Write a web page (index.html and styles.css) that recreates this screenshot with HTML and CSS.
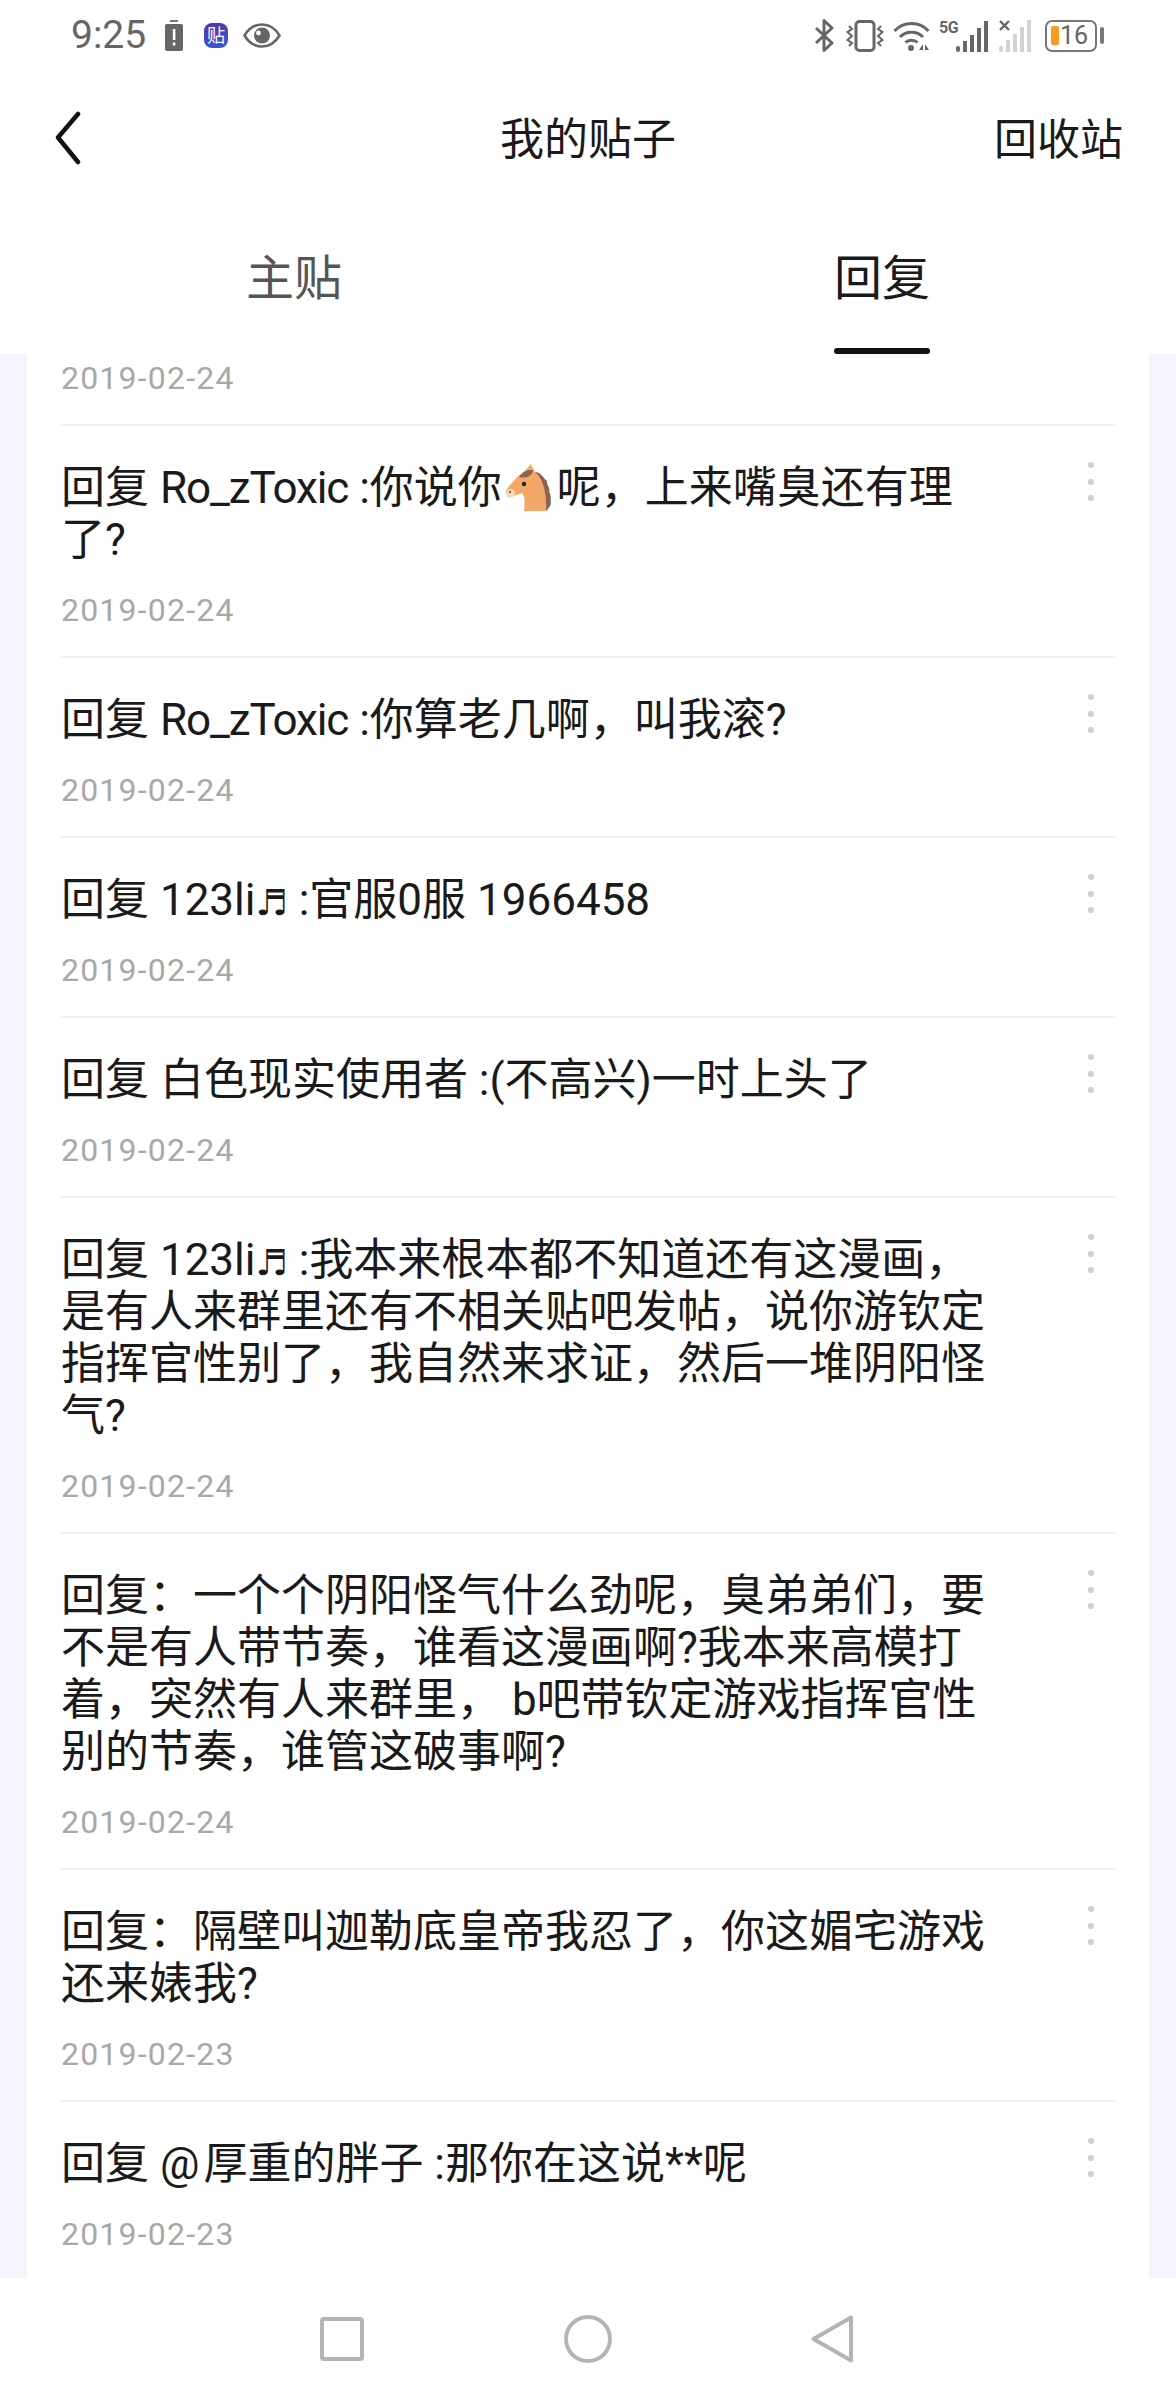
FILE: index.html
```html
<!DOCTYPE html>
<html lang="zh-CN">

<head>
  <meta charset="UTF-8">
  <meta name="viewport" content="width=device-width, initial-scale=1.0">
  <link rel="icon" href="data:,">
  <link rel="stylesheet" href="styles.css">
  <title>我的贴子</title>
</head>

<body>
  <header class="status-bar">
    <div class="status-left">
      <span class="clock">9:25</span>
      <svg class="ic-saver" viewBox="0 0 18 31">
        <rect x="5" y="0" width="8" height="2" fill="#777"/>
        <rect x="0" y="4" width="18" height="27" rx="2" fill="#666"/>
        <rect x="7.8" y="9" width="2.6" height="11" fill="#fff"/>
        <rect x="7.8" y="22.5" width="2.6" height="3" fill="#fff"/>
      </svg>
      <span class="app-badge">贴</span>
      <svg class="ic-eye" viewBox="0 0 38 25">
        <path d="M1.5 12.5C6 5 12 1.5 19 1.5S32 5 36.5 12.5C32 20 26 23.5 19 23.5S6 20 1.5 12.5Z" fill="none" stroke="#666" stroke-width="2.6"/>
        <circle cx="19" cy="12.5" r="8" fill="#666"/>
        <circle cx="15.5" cy="10" r="2.4" fill="#fff"/>
      </svg>
    </div>
    <div class="status-right">
      <svg class="ic-bt" viewBox="0 0 21 33">
        <path d="M2 9L18 24L10 31.500V1.500L18 9L2 24" fill="none" stroke="#666" stroke-width="3" stroke-linejoin="round"/>
      </svg>
      <svg class="ic-vibrate" viewBox="0 0 38 32">
        <rect x="10" y="1.500" width="18" height="29" rx="3.500" fill="none" stroke="#666" stroke-width="3"/>
        <path d="M3 6L6 9L1.500 12L6 16L1.500 20L6 23L3 26M35 6L32 9L36.500 12L32 16L36.500 20L32 23L35 26" fill="none" stroke="#666" stroke-width="2"/>
      </svg>
      <svg class="ic-wifi" viewBox="0 0 37 32">
        <path d="M1.500 11C10.500 1 26.500 1 35.500 11M7 17C13 10.500 24 10.500 30 17M12.500 22.500C15.500 19.500 21.500 19.500 24.500 22.500" fill="none" stroke="#666" stroke-width="3"/>
        <circle cx="18" cy="28" r="3" fill="#666"/>
        <path d="M26 30h4v-6zM32 24v6h4z" fill="#666"/>
      </svg>
      <div class="signal">
        <span class="net">5G</span>
        <svg class="ic-bars" viewBox="0 0 33 31">
          <rect x="0" y="25" width="4" height="6" rx="2" fill="#666"/>
          <rect x="7" y="20" width="4" height="11" fill="#666"/>
          <rect x="14" y="14" width="4" height="17" fill="#666"/>
          <rect x="21" y="7" width="4" height="24" fill="#666"/>
          <rect x="28" y="0" width="4" height="31" fill="#666"/>
        </svg>
      </div>
      <svg class="ic-bars-off" viewBox="0 0 34 32">
        <path d="M1 1L10 10M10 1L1 10" stroke="#666" stroke-width="2.400"/>
        <g fill="#d2d2d2">
          <rect x="0" y="26" width="4" height="6" rx="2"/>
          <rect x="7" y="20" width="4" height="12"/>
          <rect x="14" y="14" width="4" height="18"/>
          <rect x="21" y="7" width="4" height="25"/>
          <rect x="28" y="0" width="4" height="32"/>
        </g>
      </svg>
      <div class="battery">
        <div class="battery-body">
          <span class="battery-fill"></span>
          <span class="battery-num">16</span>
        </div>
        <span class="battery-nub"></span>
      </div>
    </div>
  </header>

  <nav class="top-nav">
    <svg class="ic-back" viewBox="0 0 26 54">
      <path d="M23 3L3 26.500L23 51" fill="none" stroke="#111" stroke-width="4.500" stroke-linecap="round" stroke-linejoin="round"/>
    </svg>
    <h1 class="nav-title">我的贴子</h1>
    <a class="nav-action">回收站</a>
  </nav>

  <div class="tabs">
    <div class="tab">主贴</div>
    <div class="tab tab-active">回复</div>
  </div>

  <main class="page">
    <ul class="post-list">
      <li class="post post-cut">
        <div class="post-body">
          <div class="post-date">2019-02-24</div>
        </div>
      </li>
      <li class="post">
        <div class="post-body">
          <p class="post-text">回复 <span class="tight">Ro_zToxic</span> :你说你<svg class="emoji" viewBox="0 0 47 48">
              <path d="M26 0L30 8C38 14 42 28 41 47L19 47C20 38 20 33 17 29L6 33C2 34 0 30 1 26C6 20 12 12 18 9Z" fill="#f4a867"/>
              <path d="M30 8C36 8 38 14 42 17C41 21 46 24 44 28C47 32 45 36 46 38C46 42 43 45 41 47C42 30 38 14 30 8Z" fill="#8c6350"/>
              <path d="M14 13C18 6 24 6 28 6C27 12 22 15 14 13Z" fill="#8c6350"/>
              <ellipse cx="5.500" cy="29" rx="4.500" ry="4" fill="#f7dcbc"/>
              <circle cx="5" cy="28" r="1.200" fill="#8c6350"/>
              <circle cx="19" cy="20" r="2.200" fill="#222"/>
            </svg>呢，上来嘴臭还有理了?</p>
          <div class="post-date">2019-02-24</div>
        </div>
        <span class="dots"><i></i><i></i><i></i></span>
      </li>
      <li class="post">
        <div class="post-body">
          <p class="post-text">回复 <span class="tight">Ro_zToxic</span> :你算老几啊，叫我滚?</p>
          <div class="post-date">2019-02-24</div>
        </div>
        <span class="dots"><i></i><i></i><i></i></span>
      </li>
      <li class="post">
        <div class="post-body">
          <p class="post-text">回复 123li<span class="note">♬</span> :官服0服 1966458</p>
          <div class="post-date">2019-02-24</div>
        </div>
        <span class="dots"><i></i><i></i><i></i></span>
      </li>
      <li class="post">
        <div class="post-body">
          <p class="post-text">回复 白色现实使用者 :(不高兴)一时上头了</p>
          <div class="post-date">2019-02-24</div>
        </div>
        <span class="dots"><i></i><i></i><i></i></span>
      </li>
      <li class="post">
        <div class="post-body">
          <p class="post-text">回复 123li<span class="note">♬</span> :我本来根本都不知道还有这漫画，是有人来群里还有不相关贴吧发帖，说你游钦定指挥官性别了，我自然来求证，然后一堆阴阳怪气?</p>
          <div class="post-date">2019-02-24</div>
        </div>
        <span class="dots"><i></i><i></i><i></i></span>
      </li>
      <li class="post">
        <div class="post-body">
          <p class="post-text">回复：一个个阴阳怪气什么劲呢，臭弟弟们，要不是有人带节奏，谁看这漫画啊?我本来高模打着，突然有人来群里， b吧带钦定游戏指挥官性别的节奏，谁管这破事啊?</p>
          <div class="post-date">2019-02-24</div>
        </div>
        <span class="dots"><i></i><i></i><i></i></span>
      </li>
      <li class="post">
        <div class="post-body">
          <p class="post-text">回复：隔壁叫迦勒底皇帝我忍了，你这媚宅游戏还来婊我?</p>
          <div class="post-date">2019-02-23</div>
        </div>
        <span class="dots"><i></i><i></i><i></i></span>
      </li>
      <li class="post">
        <div class="post-body">
          <p class="post-text">回复 <span class="at">@</span>厚重的胖子 :那你在这说**呢</p>
          <div class="post-date">2019-02-23</div>
        </div>
        <span class="dots"><i></i><i></i><i></i></span>
      </li>
    </ul>
  </main>

  <footer class="sys-nav">
    <svg class="sys-square" viewBox="0 0 44 44">
      <rect x="2" y="2" width="40" height="40" rx="2" fill="none" stroke="#b4b4b4" stroke-width="4"/>
    </svg>
    <svg class="sys-circle" viewBox="0 0 48 48">
      <circle cx="24" cy="24" r="22" fill="none" stroke="#b4b4b4" stroke-width="4"/>
    </svg>
    <svg class="sys-back" viewBox="0 0 42 48">
      <path d="M40 2.500V45.500L2.500 24Z" fill="none" stroke="#b4b4b4" stroke-width="4" stroke-linejoin="round"/>
    </svg>
  </footer>
</body>

</html>
```

FILE: styles.css
```css
* {
  box-sizing: border-box;
}

body {
  margin: 0;
  height: 2400px;
  overflow: hidden;
  display: flex;
  flex-direction: column;
  font-family: Roboto, "Noto Sans CJK SC", sans-serif;
  color: #1a1a1a;
  background: #f6f5fe;
}

/* status bar */
.status-bar {
  flex: none;
  height: 68px;
  padding: 19px 72px 0 71px;
  display: flex;
  justify-content: space-between;
  align-items: flex-start;
  background: #fff;
}

.status-left,
.status-right {
  display: flex;
  align-items: center;
  height: 33px;
}

.clock {
  width: 94px;
  font-size: 39px;
  line-height: 33px;
  color: #666;
}

.ic-saver {
  width: 18px;
  height: 31px;
}

.app-badge {
  width: 24px;
  height: 25px;
  margin: 0 15px 0 21px;
  border-radius: 8px;
  background: linear-gradient(160deg, #5b2ea6, #2f5fd8);
  color: #fff;
  font-size: 18px;
  line-height: 25px;
  text-align: center;
}

.ic-eye {
  width: 38px;
  height: 25px;
}

.ic-bt {
  width: 21px;
  height: 33px;
}

.ic-vibrate {
  width: 38px;
  height: 32px;
  margin-left: 11px;
}

.ic-wifi {
  width: 37px;
  height: 32px;
  margin-left: 9px;
}

.signal {
  position: relative;
  width: 50px;
  height: 33px;
  margin-left: 9px;
  display: flex;
  justify-content: flex-end;
  align-items: flex-end;
}

.net {
  position: absolute;
  left: 0;
  top: 1px;
  font-size: 16px;
  line-height: 16px;
  font-weight: 700;
  letter-spacing: -0.5px;
  color: #666;
}

.ic-bars {
  width: 33px;
  height: 31px;
}

.ic-bars-off {
  width: 34px;
  height: 32px;
  margin-left: 10px;
}

.battery {
  margin-left: 12px;
  display: flex;
  align-items: center;
  gap: 3px;
}

.battery-body {
  position: relative;
  width: 52px;
  height: 32px;
  border: 2.500px solid #777;
  border-radius: 7px;
  text-align: right;
  padding-right: 7px;
  font-size: 25px;
  line-height: 27px;
  color: #666;
}

.battery-fill {
  position: absolute;
  left: 4px;
  top: 4px;
  width: 8px;
  height: 19px;
  border-radius: 2px;
  background: #f79a1e;
}

.battery-num {
  position: relative;
}

.battery-nub {
  width: 4px;
  height: 17px;
  border-radius: 2px;
  background: #777;
}

/* title row */
.top-nav {
  flex: none;
  position: relative;
  height: 140px;
  padding: 0 53px 0 55px;
  display: flex;
  justify-content: space-between;
  align-items: center;
  background: #fff;
}

.ic-back {
  width: 26px;
  height: 54px;
}

.nav-title {
  position: absolute;
  left: 0;
  right: 0;
  margin: 0 0 5px;
  text-align: center;
  font-size: 44px;
  font-weight: 400;
}

.nav-action {
  position: relative;
  margin-bottom: 5px;
  font-size: 43px;
}

/* tabs */
.tabs {
  flex: none;
  height: 146px;
  display: flex;
  background: #fff;
}

.tab {
  flex: 1;
  padding-top: 39px;
  text-align: center;
  font-size: 48px;
  line-height: 64px;
  color: #555;
}

.tab-active {
  position: relative;
  color: #1a1a1a;
}

.tab-active::after {
  content: "";
  position: absolute;
  left: calc(50% - 48px);
  bottom: 0;
  width: 96px;
  height: 6px;
  border-radius: 3px;
  background: #111;
}

/* list */
.page {
  flex: 1;
  min-height: 0;
  overflow: hidden;
  padding: 0 27px;
}

.post-list {
  margin: 0;
  padding: 0 33px 0 34px;
  list-style: none;
  background: #fff;
  height: 100%;
}

.post {
  display: flex;
  justify-content: space-between;
  align-items: flex-start;
  padding: 36px 0 22px;
  border-bottom: 2px solid #f0f0f0;
}

.post-cut {
  padding-top: 0;
}

.post-body {
  width: 930px;
}

.post-text {
  margin: 0 0 20px;
  font-size: 44px;
  line-height: 52px;
}

.post-date {
  font-size: 32px;
  line-height: 48px;
  letter-spacing: 1.2px;
  color: #a8a8a8;
}

.tight {
  letter-spacing: -1.1px;
}

.at {
  letter-spacing: 4px;
}

.note {
  font-family: "DejaVu Sans", sans-serif;
  font-size: 36px;
  line-height: 0;
}

.emoji {
  width: 47px;
  height: 48px;
  margin: 0 5px 0 3px;
  vertical-align: -9px;
}

.dots {
  display: flex;
  flex-direction: column;
  gap: 10.500px;
  margin: 0 22px 0 0;
}

.dots i {
  width: 6px;
  height: 6px;
  border-radius: 50%;
  background: #d0d0d0;
}

/* system buttons */
.sys-nav {
  flex: none;
  height: 122px;
  display: flex;
  align-items: center;
  background: #fff;
}

.sys-square {
  width: 44px;
  height: 44px;
  margin-left: 320px;
}

.sys-circle {
  width: 48px;
  height: 48px;
  margin-left: 200px;
}

.sys-back {
  width: 42px;
  height: 48px;
  margin-left: 199px;
}
```
